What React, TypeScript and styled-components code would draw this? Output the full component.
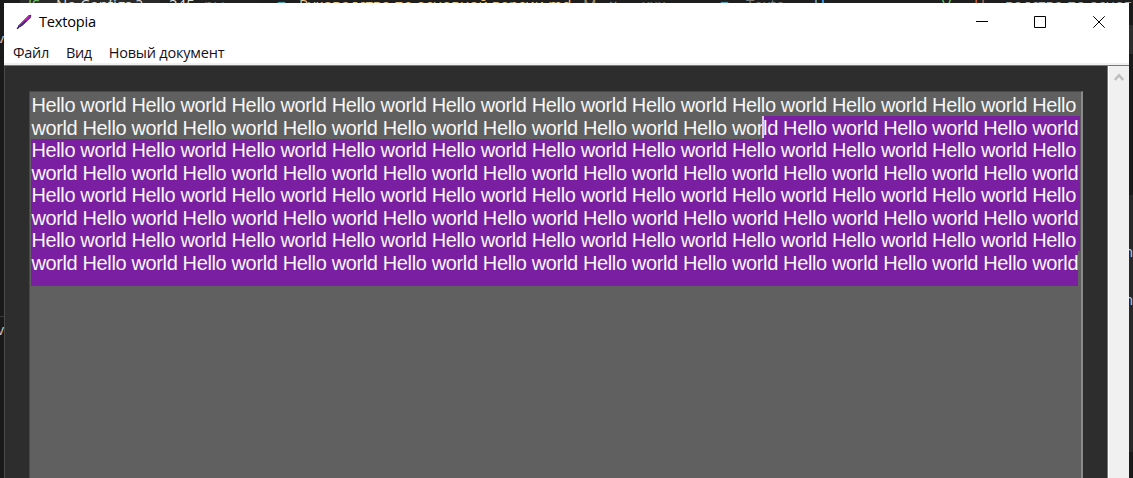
import React from "react";
import styled, { createGlobalStyle } from "styled-components";

const Global = createGlobalStyle`
  * { box-sizing: border-box; }
  html, body { margin: 0; overflow: hidden; background: #1c1c1c; }
`;

const Desktop = styled.div`
  width: 1133px;
  height: 478px;
  display: grid;
  grid-template: 3px 475px / 4px 1125px 4px;
  background: #1c1c1c;
  overflow: hidden;
`;

const TabStrip = styled.div`
  grid-column: 1 / 4;
  height: 3px;
  overflow: hidden;
  display: flex;
  align-items: flex-start;
  padding-left: 28px;
  background: linear-gradient(90deg, #1c1c1c 20px, #2a2a2a 20px, #2a2a2a 160px, #202020 160px, #202020 258px, #1e1e1e 258px);
  font: 15px/15px "Open Sans", sans-serif;
`;

const TabText = styled.span<{ $width: number; $color: string }>`
  flex: 0 0 ${(p) => p.$width}px;
  margin-top: -3px;
  color: ${(p) => p.$color};
  white-space: nowrap;
`;

const Edge = styled.div`
  display: flex;
  flex-direction: column;
  overflow: hidden;
  background: #1a1a1a;
  font: 14px/14px "Open Sans", sans-serif;
  color: #ccc;
`;

const EdgeBlock = styled.div<{ $height: number; $color?: string }>`
  flex: 0 0 ${(p) => p.$height}px;
  background: ${(p) => p.$color ?? "transparent"};
`;

const EdgeText = styled(EdgeBlock)`
  display: flex;
  justify-content: flex-end;
  overflow: hidden;
`;

const Window = styled.div`
  display: flex;
  flex-direction: column;
  background: #fff;
`;

const TitleBar = styled.header`
  height: 38px;
  display: flex;
  align-items: center;
  padding: 0 1px 0 12px;
`;

const Title = styled.span`
  padding: 0 0 2px 7px;
  flex: 1;
  font: 14.6px/20px "Open Sans", sans-serif;
  letter-spacing: -0.2px;
  color: #000;
`;

const WindowButton = styled.div`
  width: 58.5px;
  height: 38px;
  display: flex;
  align-items: center;
  justify-content: center;
`;

const MenuBar = styled.nav`
  height: 24px;
  display: flex;
  align-items: center;
  padding: 2px 0 0 9px;
  gap: 17px;
  border-bottom: 2px solid #f0f0f0;
  font: 14.5px/20px "Open Sans", sans-serif;
  color: #1a1018;
`;

const MenuItem = styled.span<{ $spacing: number }>`
  letter-spacing: ${(p) => p.$spacing}px;
  white-space: nowrap;
`;

const Content = styled.div`
  flex: 1;
  display: flex;
  border-top: 1px solid #777;
`;

const Client = styled.main`
  width: 1104px;
  padding: 25px 0 0 24px;
  background: #2d2d2d;
  border-left: 1px solid #4a4a4a;
  border-right: 1px solid #777;
`;

const Editor = styled.div`
  width: 1054px;
  height: 400px;
  padding: 1.5px 0 0 1px;
  background: #606060;
  border: 1px solid #484848;
  border-right: 2px solid #8a8a8a;
  font: 20px/23.5px "Liberation Sans", Arial, sans-serif;
  letter-spacing: -0.367px;
  color: #f6f6f6;
`;

const Line = styled.div<{ $selected?: boolean; $width?: number }>`
  height: 22.5px;
  width: ${(p) => p.$width ?? 1049}px;
  padding: 0.5px 0 0 0.4px;
  white-space: pre;
  background: ${(p) => (p.$selected ? "#7b1fa2" : "transparent")};
`;

const SplitLine = styled(Line)`
  background: linear-gradient(90deg, transparent 732px, #7b1fa2 732px);
  position: relative;
`;

const Caret = styled.i`
  position: absolute;
  left: 731px;
  top: 0;
  width: 2px;
  height: 22px;
  background: #e4c8ec;
`;

const SelectionTail = styled.div`
  width: 1047px;
  height: 12.5px;
  background: #7b1fa2;
`;

const ScrollBar = styled.aside`
  width: 21px;
  background: #f0f0f0;
  border-left: 1px solid #fff;
  display: flex;
  justify-content: center;
  padding: 7px 1px 0 0;
`;

const odd = "Hello world ".repeat(10) + "Hello";
const even = "world " + "Hello world ".repeat(10).trimEnd();

export default function App() {
  return (
    <>
      <Global />
      <Desktop>
        <TabStrip>
          <TabText $width={28} $color="#73c66b">JS</TabText>
          <TabText $width={113} $color="#ddd">No Configs ?</TabText>
          <TabText $width={35} $color="#ddd">345</TabText>
          <TabText $width={73} $color="#777">ры</TabText>
          <TabText $width={22} $color="#519aba">■</TabText>
          <TabText $width={284} $color="#e2c08d">Руководство по основной версии.md</TabText>
          <TabText $width={26} $color="#a58d69">M</TabText>
          <TabText $width={33} $color="#999">×</TabText>
          <TabText $width={78} $color="#777">ххх</TabText>
          <TabText $width={26} $color="#519aba">■</TabText>
          <TabText $width={68} $color="#777">Texto</TabText>
          <TabText $width={128} $color="#75beff">U</TabText>
          <TabText $width={32} $color="#73c66b">V</TabText>
          <TabText $width={31} $color="#d16b52">H</TabText>
          <TabText $width={128} $color="#aaa">водство по основной</TabText>
        </TabStrip>
        <Edge>
          <EdgeBlock $height={29} />
          <EdgeText $height={11}>v</EdgeText>
          <EdgeBlock $height={273} />
          <EdgeBlock $height={1} $color="#383838" />
          <EdgeBlock $height={6} />
          <EdgeText $height={14}>v</EdgeText>
        </Edge>
        <Window>
          <TitleBar>
            <svg width="16" height="16" viewBox="0 0 16 16">
              <path d="M1.4 14.3 2.3 11.5 12.3 1.6 14.5.8 15.4 1.6 14.6 4 4.3 13.1Z" fill="#4c2478" />
              <path d="M5.5 10.9 14 2.2" stroke="#a716b4" strokeWidth="2.6" />
              <path d="M3 11.3 12.8 1.8" stroke="#b8608f" strokeWidth="1" />
              <path d="m4 12.5 6-5.6" stroke="#3b2a7e" strokeWidth="1.6" />
              <path d="m1 14.8 1.8-1.5" stroke="#21172f" strokeWidth="1.3" />
            </svg>
            <Title>Textopia</Title>
            <WindowButton>
              <svg width="12" height="12"><path d="M0 5.5h12" stroke="#000" /></svg>
            </WindowButton>
            <WindowButton>
              <svg width="12" height="12"><path d="M.5.5h11v11H.5z" stroke="#000" fill="none" /></svg>
            </WindowButton>
            <WindowButton>
              <svg width="12" height="12"><path d="m.3.3 11.4 11.4M11.7.3.3 11.7" stroke="#000" /></svg>
            </WindowButton>
          </TitleBar>
          <MenuBar>
            <MenuItem $spacing={-0.3}>Файл</MenuItem>
            <MenuItem $spacing={-0.4}>Вид</MenuItem>
            <MenuItem $spacing={-0.2}>Новый документ</MenuItem>
          </MenuBar>
          <Content>
            <Client>
              <Editor>
                <Line>{odd}</Line>
                <SplitLine>{even}<Caret /></SplitLine>
                <Line $selected>{odd}</Line>
                <Line $selected>{even}</Line>
                <Line $selected>{odd}</Line>
                <Line $selected>{even}</Line>
                <Line $selected>{odd}</Line>
                <Line $selected $width={1047}>{even}</Line>
                <SelectionTail />
              </Editor>
            </Client>
            <ScrollBar>
              <svg width="10" height="9"><path d="m.8 7 4.2-4.6L9.2 7" stroke="#bfbfbf" strokeWidth="2.4" fill="none" /></svg>
            </ScrollBar>
          </Content>
        </Window>
        <Edge>
          <EdgeBlock $height={22} />
          <EdgeBlock $height={29} $color="#2d2d2d" />
          <EdgeBlock $height={141} />
          <EdgeBlock $height={50} $color="#282828" />
          <EdgeText $height={14} $color="#282828">n</EdgeText>
          <EdgeBlock $height={34} $color="#282828" />
          <EdgeText $height={14} $color="#282828">n</EdgeText>
          <EdgeBlock $height={145} $color="#282828" />
        </Edge>
      </Desktop>
    </>
  );
}
